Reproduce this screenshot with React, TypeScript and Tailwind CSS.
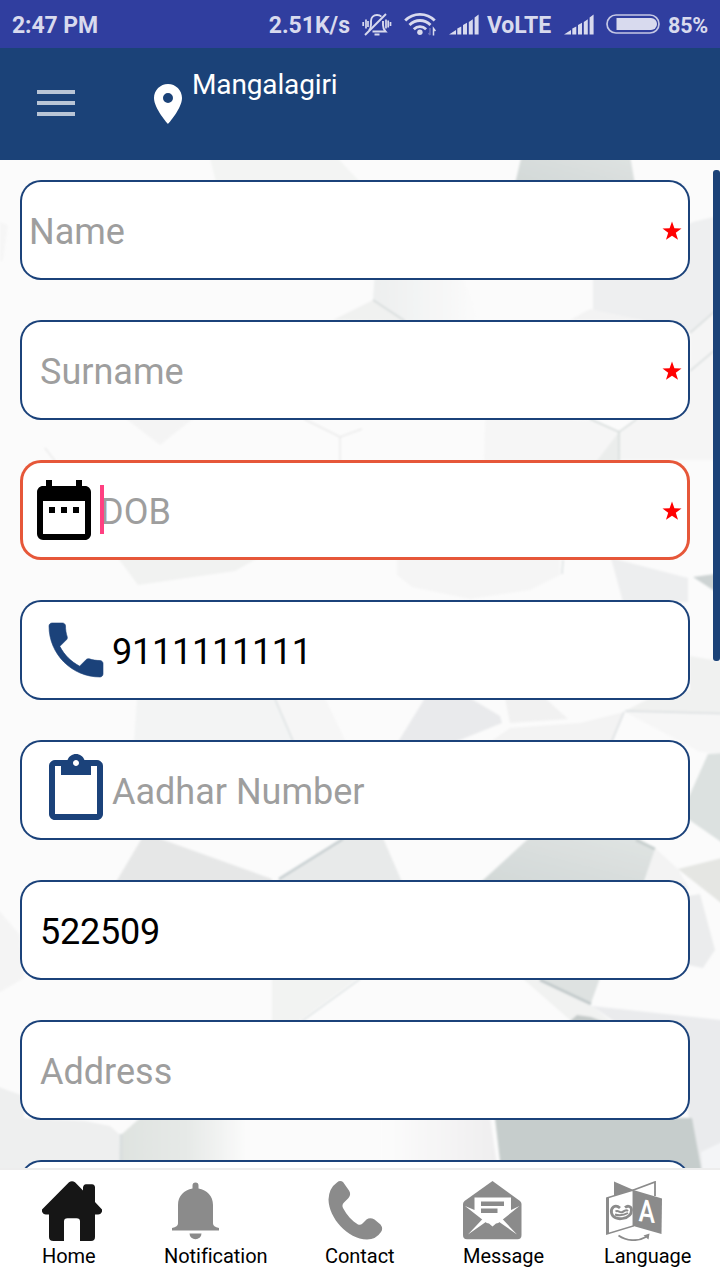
import type { ReactNode } from "react";
import { MdContentPaste, MdDateRange, MdLocationOn } from "react-icons/md";

function Backdrop() {
  return (
    <svg
      className="absolute inset-0 h-full w-full"
      viewBox="0 160 720 1008"
      preserveAspectRatio="none"
      aria-hidden="true"
    >
      <defs>
        <linearGradient id="fadeRight" x1="0" x2="1" y1="0" y2="0">
          <stop offset="0" stopColor="#dfe3e0" />
          <stop offset="0.5" stopColor="#e6e9e7" />
          <stop offset="1" stopColor="#fcfcfc" />
        </linearGradient>
        <linearGradient id="fadeSoft" x1="0" x2="1" y1="0" y2="0">
          <stop offset="0" stopColor="#edefef" />
          <stop offset="1" stopColor="#fbfbfb" />
        </linearGradient>
        <linearGradient id="fadeLeft" x1="0" x2="1" y1="0" y2="0">
          <stop offset="0" stopColor="#fcfcfc" />
          <stop offset="1" stopColor="#efeeef" />
        </linearGradient>
        <linearGradient id="steel" x1="0" x2="1" y1="1" y2="0">
          <stop offset="0" stopColor="#d2d8d7" />
          <stop offset="1" stopColor="#e0e4e3" />
        </linearGradient>
        <filter id="soften" x="-2%" y="-2%" width="104%" height="104%">
          <feGaussianBlur stdDeviation="0.9" />
        </filter>
      </defs>
      <rect x="0" y="160" width="720" height="1008" fill="#fbfbfb" />
      <g filter="url(#soften)">
        <polygon points="208,150 330,150 360,182 216,182" fill="#f3f4f3" />
        <polygon points="523,150 629,150 635,184 515,184" fill="url(#steel)" />
        <polygon points="0,222 8,225 3,260 0,262" fill="#f6f6f6" />
        <polygon points="693,222 730,213 730,300 689,333 640,320 593,310 593,270" fill="#eeeff0" />
        <polygon points="690,333 730,300 730,460 619,460 619,432 637,420 690,371" fill="#f5f5f5" />
        <polygon points="375,270 373,300 408,322 480,322 460,270" fill="url(#fadeSoft)" />
        <polygon points="333,320 373,300 405,322" fill="#f0f1f0" />
        <polygon points="570,320 590,309 640,320" fill="#f3f3f3" />
        <polygon points="485,418 590,420 619,432 618,462 484,462" fill="#f6f6f6" />
        <polygon points="619,432 618,462 596,462" fill="#ebedec" />
        <polygon points="125,418 194,418 160,445" fill="#f4f4f4" />
        <polygon points="118,558 258,558 235,571 138,585" fill="#f1f2f1" />
        <polygon points="397,558 560,558 560,575 530,590 470,599 412,587 397,575" fill="#f5f5f5" />
        <polygon points="611,558 688,578 688,602 623,602" fill="#edeeef" />
        <polygon points="693,577 730,572 730,601" fill="#cdd3d3" />
        <polygon points="137,698 275,698 293,742 134,742" fill="#f3f4f4" />
        <polygon points="275,698 325,698 346,742 293,742" fill="#f6f6f6" />
        <polygon points="425,698 470,698 500,716 502,723 455,742 398,742" fill="#e9eaec" />
        <polygon points="505,698 545,698 568,719 510,723" fill="#f1f1f1" />
        <polygon points="510,728 580,723 624,712 612,742 490,742" fill="#f3f3f3" />
        <polygon points="690,656 730,663 730,713 625,711 650,698 690,690" fill="#f0f1f0" />
        <polygon points="625,712 730,714 730,755 700,752" fill="#f6f6f6" />
        <polygon points="708,754 730,753 730,848 688,819 688,799" fill="#dce1e0" />
        <polygon points="678,869 730,856 730,910" fill="#e5e6e3" />
        <polygon points="655,848 678,869 690,890 645,882" fill="#f3f3f3" />
        <polygon points="142,838 158,838 272,879 272,882 116,882" fill="#e6e7e7" />
        <polygon points="342,838 383,838 402,882 276,882" fill="#e8eaea" />
        <polygon points="529,838 638,838 655,849 644,882 481,882" fill="url(#steel)" />
        <polygon points="688,896 700,894 715,950 703,968 688,965" fill="#ebeced" />
        <polygon points="-10,900 20,935 24,978 -10,998" fill="#f4f4f4" />
        <polygon points="272,978 358,978 298,1022 272,1022" fill="#f2f3f2" />
        <polygon points="522,978 540,978 592,1006 612,1022 570,1020" fill="#f1f2f1" />
        <polygon points="538,978 600,978 591,1003" fill="#dee2e1" />
        <polygon points="592,1006 730,1021 730,1178 698,1178 680,1060 615,1022" fill="#eaebed" />
        <polygon points="569,1022 577,1015 591,1017 604,1022" fill="#c4cac9" />
        <polygon points="-10,1084 24,1096 24,1118 85,1121 110,1126 119,1134 121,1178 -10,1178" fill="#eeefef" />
        <polygon points="122,1134 140,1118 250,1118 250,1178 122,1178" fill="url(#fadeRight)" />
        <polygon points="380,1118 490,1118 499,1178 380,1178" fill="url(#fadeLeft)" />
        <polygon points="495,1118 692,1118 703,1178 502,1178" fill="#c6cdcc" />
        <polygon points="701,1152 730,1138 730,1178 703,1178" fill="#f4f5f7" />
        <g fill="none" strokeWidth="1.5">
          <path d="M373 300 405 321M690 333 722 305M690 371 722 344" stroke="#d6dbdb" />
          <path d="M590 419 619 432 637 419M619 432V461" stroke="#d4dad9" />
          <path d="M304 419 340 437 362 429M340 437V461M45 448 55 461" stroke="#ebebeb" />
          <path d="M563 560 562 574M275 699 293 741M360 979 302 1021" stroke="#dce1e2" />
          <path d="M625 711 722 713.500M624 712 612 741" stroke="#dadee0" />
          <path d="M343 839 279 879" stroke="#c6ced0" strokeWidth="2.500" />
          <path d="M540 980 591 1004" stroke="#c0c8c9" strokeWidth="2.500" />
          <path d="M636 840 655 849" stroke="#c6cecd" strokeWidth="2.500" />
          <path d="M121 1134V1170" stroke="#d8dede" strokeWidth="3" />
        </g>
      </g>
    </svg>
  );
}

function MutedBell() {
  return (
    <svg className="h-6 w-[30px] shrink-0" viewBox="0 0 30 24" fill="none" stroke="#d8daee" strokeWidth="1.900">
      <path d="M7 18.500c1.500-1.500 2-3 2-6V9c0-3.500 2.500-6 6-6 1.800 0 3.300.6 4.400 1.700M21 9v4c0 3 .6 4.500 2.500 6.500H10.500" />
      <path d="M3 23 24 2" />
      <path d="M12.500 22.500h5" strokeWidth="2" />
      <path d="M1.200 10v4M4 7.500v9M6 9v6M24 7.500v9M26.200 8.500v7M28.500 10v4" strokeWidth="1.700" />
    </svg>
  );
}

function Wifi() {
  return (
    <svg className="h-6 w-8 shrink-0" viewBox="0 0 32 24" fill="none" stroke="#d8daee" strokeWidth="2.800">
      <path d="M1.200 8.500c8-8.300 21.500-8.300 29.500 0M5.500 13c6-6 15-6 21 0M9.800 17.300c3.600-3.600 8.700-3.600 12.300 0" />
      <circle cx="15.900" cy="20.300" r="2.700" fill="#d8daee" stroke="none" />
      <path d="M26 16v7M24.500 21 26 23" stroke="#6b72b9" strokeWidth="1.500" />
      <path d="M29.500 23.500V16.500l2 2.500" strokeWidth="1.500" />
    </svg>
  );
}

function Signal() {
  return (
    <svg className="h-[21px] w-[30px] shrink-0" viewBox="0 0 30 21" fill="#d8daee">
      <path d="M0 20.500 7 16v4.500zM8.300 14.500l4-2v8h-4zM14 11l4-2.200v11.700h-4zM19.800 8l4-2.800v15.300h-4zM25.600 3.600 29.600.5v20h-4z" />
    </svg>
  );
}

function Battery() {
  return (
    <svg className="h-5 w-[54px] shrink-0" viewBox="0 0 54 20">
      <rect x="1" y="1" width="52" height="18" rx="9" fill="none" stroke="#c5c8e5" strokeWidth="1.700" />
      <path d="M10.500 4H45a6 6 0 0 1 0 12H10.500z" fill="#d8daee" />
    </svg>
  );
}

function PhoneIcon() {
  return (
    <svg className="h-[72px] w-[72px] shrink-0" viewBox="0 0 24 24" fill="#1b427a" stroke="#1b427a" strokeWidth="0.2">
      <path d="M6.620 10.790c1.440 2.830 3.760 5.140 6.590 6.590l2.200-2.200c.27-.27.67-.36 1.020-.24 1.120.37 2.330.57 3.570.57.55 0 1 .45 1 1V20c0 .55-.45 1-1 1-9.390 0-17-7.610-17-17 0-.55.45-1 1-1h3.500c.55 0 1 .45 1 1 0 1.250.2 2.450.57 3.570.11.35.03.74-.25 1.020l-2.200 2.200z" />
    </svg>
  );
}

function Star() {
  return (
    <svg className="mt-px h-5 w-5 shrink-0" viewBox="0 0 20 20" fill="#ff0000">
      <path d="M10 .5 12.400 7.300 19.500 7.500 13.800 11.800 16 18.800 10 14.700 4 18.800 6.200 11.800.5 7.500 7.600 7.300z" />
    </svg>
  );
}

function HomeIcon() {
  return (
    <svg className="h-[60px] w-[60px]" viewBox="0 0 60 60" fill="#161616">
      <path d="M27 1.300Q30 -1 33 1.300L41 9.500V6.500Q41.300 3.500 44 3.300H50Q53 3.500 53 6.500V21L60 28.500V30.500Q59 33.500 56 33.500H53V56Q53 60 49 60H38V40.500Q38 37.200 34.500 37.200H25.500Q22 37.200 22 40.500V60H11.500Q7 60 7 56V33.500H4Q1 33.500 0 30.500V28.500z" />
    </svg>
  );
}

function BellIcon() {
  return (
    <svg className="ml-2 h-[60px] w-[48px]" viewBox="0 0 48 60" fill="#8b8b8b">
      <path d="M20.500 4.500a3 3 0 0 1 6 0V7.500C35 9 41 15 41 24V42.500c0 2 2 3.500 6 4.500v2.500H0V47c4-1 6-2.500 6-4.500V24C6 15 12 9 20.500 7.500z" />
      <path d="M17.500 52.500h12a6 5.700 0 0 1-12 0z" />
    </svg>
  );
}

function ContactIcon() {
  return (
    <svg className="ml-[3px] h-[60px] w-[55px]" viewBox="0 0 55 60" fill="#8b8b8b">
      <path d="M9 1.500Q12-1 15 1L21 9.500Q23.500 13.500 20.500 17L16 21.500Q13.500 24 15 27C19 34.500 24 40 30 43.500Q32.500 44.500 34.500 42.500L38.500 38.500Q42 36 46.500 38.500L52.500 43.500Q55.500 47.500 53 51Q48 58.500 39 58.500C19.500 58 .8 37 .5 18.500Q1 7 9 1.500z" />
    </svg>
  );
}

function MessageIcon() {
  return (
    <svg className="h-[60px] w-[59px]" viewBox="0 0 59 60" fill="#8b8b8b">
      <path d="M29.500 0 57 20Q58.500 21.500 58.500 23V54Q58.500 58.300 54.500 58.300H4Q0 58.300 0 54V23Q0 21.500 1.500 20z" />
      <path d="M11.500 16.500H48V29L56.500 25 38.500 39.500Q36 42 33 42.500L29.500 45.500 26 42.500Q23 42 20.500 39.500L2 25 11.500 29z" fill="#fff" />
      <path d="M20 37.500 23.500 40.500 5 53.500zM39 37.500 35.500 40.500 54 53.500z" fill="#fff" />
      <path d="M18 20.500H41V25H18zM18 27.500H34.500V32H18z" />
    </svg>
  );
}

function LanguageIcon() {
  return (
    <svg className="ml-0.5 h-[60px] w-[57px]" viewBox="0 0 57 60" fill="none" stroke="#8b8b8b">
      <path d="M8 .5 27.500 9 8 15z" fill="#8b8b8b" stroke="none" />
      <path d="M27.500 9 49 1V15" strokeWidth="1.800" />
      <path d="M.8 17 27.300 9V45L.8 53z" fill="#fff" strokeWidth="1.500" />
      <path d="M1.500 17V52.500" strokeWidth="3" />
      <path d="M27.300 9 56 17.500 55.500 53 27.300 45z" fill="#8b8b8b" stroke="none" />
      <path
        d="M14 27C9 22.500 4.500 27 5.500 32c1 4.500 6 6.500 11 5.500 5.500-1 9-4 9-8.500 0-3.500-3.500-5-6.500-2.500"
        strokeWidth="2.800"
      />
      <path d="M9.500 30.500c3-2 4 2 7 .5s3.500-3 5.500-1M9 33.500c4.500 1.500 8.500 1 13-1.500" strokeWidth="2" />
      <text
        transform="matrix(0.8 0.1 0 1 40.800 41)"
        textAnchor="middle"
        className="font-['Roboto'] text-[31px] font-medium"
        fill="#fff"
        stroke="none"
      >
        A
      </text>
      <path d="M12.500 54.500C21 60.500 32 60.500 40 56" strokeWidth="1.700" />
      <path d="M37.500 54.500 43.500 52.500 42.500 58.500z" fill="#8b8b8b" stroke="none" />
    </svg>
  );
}

type FieldProps = {
  text: string;
  icon?: ReactNode;
  inset: string;
  filled?: boolean;
  required?: boolean;
  focused?: boolean;
};

function Field({ text, icon, inset, filled, required, focused }: FieldProps) {
  return (
    <div
      className={`relative flex h-[100px] shrink-0 items-center rounded-[21px] bg-white pr-2 ${
        focused ? "ring-[3px] ring-[#e65739] ring-inset" : "ring-2 ring-[#1b427a] ring-inset"
      } ${inset}`}
    >
      {icon}
      {focused && <span className="absolute top-[25px] left-20 h-[49px] w-1 bg-[#ff4081]" />}
      <span
        className={`mt-[3px] flex-1 text-[36px] leading-[42px] ${
          filled ? "tracking-[-0.25px] text-black" : "text-[#9e9e9e]"
        }`}
      >
        {text}
      </span>
      {required && <Star />}
    </div>
  );
}

function NavItem({ label, icon, width, active }: { label: string; icon: ReactNode; width: string; active?: boolean }) {
  return (
    <a className={`flex flex-col items-start ${width}`} aria-current={active ? "page" : undefined}>
      {icon}
      <span className="mt-[3px] text-[20px] leading-6 tracking-[-0.05px] text-black">{label}</span>
    </a>
  );
}

export default function App() {
  return (
    <div className="flex h-[1280px] w-[720px] flex-col overflow-hidden bg-white font-['Roboto',sans-serif]">
      <div className="flex h-12 shrink-0 items-center bg-[#303e9f] pr-3 pl-3 text-[23px] font-bold text-[#d8daee]">
        <span className="pt-1 tracking-[-0.1px]">2:47 PM</span>
        <span className="ml-auto pt-1">2.51K/s</span>
        <span className="ml-3 flex"><MutedBell /></span>
        <span className="ml-3 flex"><Wifi /></span>
        <span className="ml-[13px] flex pt-px"><Signal /></span>
        <span className="ml-2 pt-1 tracking-[-0.1px]">VoLTE</span>
        <span className="ml-[13px] flex pt-px"><Signal /></span>
        <span className="ml-3 flex"><Battery /></span>
        <span className="ml-2 pt-1 text-[21.5px] tracking-[-0.2px]">85%</span>
      </div>

      <header className="flex h-28 shrink-0 bg-[#1b4278] pl-[37px]">
        <div className="mt-[42px] flex w-[38px] flex-col gap-[7px]">
          <span className="h-1 bg-[#b9c5d6]" />
          <span className="h-1 bg-[#b9c5d6]" />
          <span className="h-1 bg-[#b9c5d6]" />
        </div>
        <MdLocationOn className="mt-8 ml-[69px] h-12 w-12 text-white" />
        <span className="mt-5 text-[28px] leading-[33px] tracking-[-0.13px] text-white">Mangalagiri</span>
      </header>

      <main className="relative h-[1008px] shrink-0 overflow-hidden">
        <Backdrop />
        <div className="relative flex flex-col gap-10 pt-5 pr-[30px] pl-5">
          <Field text="Name" inset="pl-[9px]" required />
          <Field text="Surname" inset="pl-5" required />
          <Field
            text="DOB"
            inset="pl-2"
            icon={<MdDateRange className="h-[72px] w-[72px] shrink-0 text-black" />}
            required
            focused
          />
          <Field text="9111111111" inset="pl-5" icon={<PhoneIcon />} filled />
          <Field
            text="Aadhar Number"
            inset="pl-5"
            icon={<MdContentPaste className="h-[72px] w-[72px] shrink-0 text-[#1b427a]" />}
          />
          <Field text="522509" inset="pl-5" filled />
          <Field text="Address" inset="pl-5" />
          <Field text="" inset="pl-5" />
        </div>
        <div className="absolute top-[10px] right-0 h-[491px] w-[7px] rounded-[3px] bg-[#1b4278]" />
      </main>

      <nav className="flex h-28 shrink-0 border-t-2 border-[#ededed] bg-white pt-[11px] pl-[42px]">
        <NavItem label="Home" width="w-[122px]" icon={<HomeIcon />} active />
        <NavItem label="Notification" width="w-[161px]" icon={<BellIcon />} />
        <NavItem label="Contact" width="w-[138px]" icon={<ContactIcon />} />
        <NavItem label="Message" width="w-[141px]" icon={<MessageIcon />} />
        <NavItem label="Language" width="w-[116px]" icon={<LanguageIcon />} />
      </nav>
    </div>
  );
}
